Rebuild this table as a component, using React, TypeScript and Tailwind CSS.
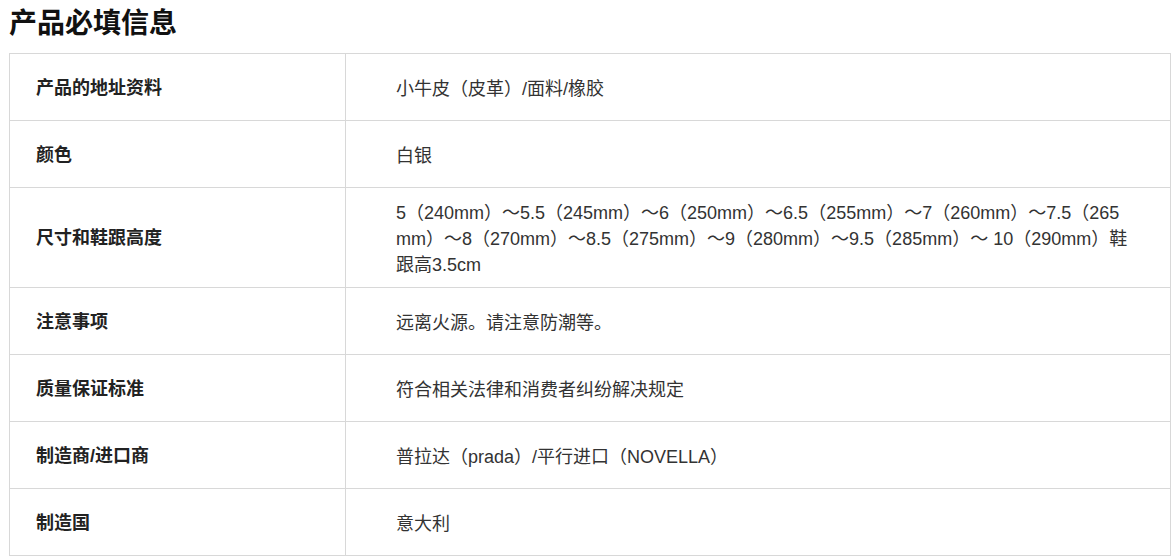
import React from "react";

const rows: [string, string][] = [
  ["产品的地址资料", "小牛皮（皮革）/面料/橡胶"],
  ["颜色", "白银"],
  [
    "尺寸和鞋跟高度",
    "5（240mm）〜5.5（245mm）〜6（250mm）〜6.5（255mm）〜7（260mm）〜7.5（265mm）〜8（270mm）〜8.5（275mm）〜9（280mm）〜9.5（285mm）〜 10（290mm）鞋跟高3.5cm",
  ],
  ["注意事项", "远离火源。请注意防潮等。"],
  ["质量保证标准", "符合相关法律和消费者纠纷解决规定"],
  ["制造商/进口商", "普拉达（prada）/平行进口（NOVELLA）"],
  ["制造国", "意大利"],
];

export default function App() {
  return (
    <div
      className="w-[1176px] h-[556px] bg-white text-[#333] overflow-hidden"
      style={{ fontFamily: '"Liberation Sans", "Noto Sans CJK SC", sans-serif' }}
    >
      <h1 className="pl-[9px] pt-[6px] h-[53px] text-[28px] leading-[36px] font-bold text-[#111]">
        产品必填信息
      </h1>
      <table className="ml-[9px] w-[1162px] table-fixed border-collapse border border-[#d8d8d8] text-[18px]">
        <colgroup>
          <col className="w-[336px]" />
          <col />
        </colgroup>
        <tbody>
          {rows.map(([k, v]) => (
            <tr key={k}>
              <td className="h-[67px] border border-[#d8d8d8] pl-[26px] pt-[2px] font-bold text-[#222] align-middle">
                {k}
              </td>
              <td className="h-[67px] border border-[#d8d8d8] pl-[50px] pr-[36px] pt-[12px] pb-[9px] leading-[26px] align-middle break-all">
                {v}
              </td>
            </tr>
          ))}
        </tbody>
      </table>
    </div>
  );
}
